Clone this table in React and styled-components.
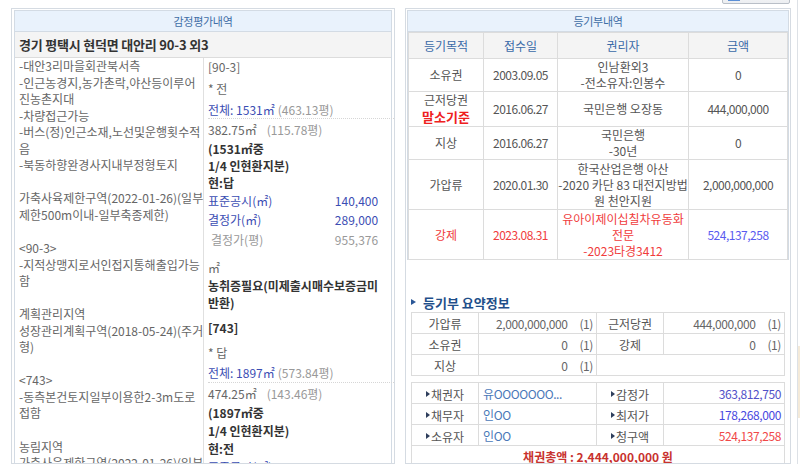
import React from "react";
import styled, { createGlobalStyle } from "styled-components";

const GlobalStyle = createGlobalStyle`
  html, body {
    margin: 0;
    padding: 0;
    background: #fff;
    overflow: hidden;
  }
  body {
    font-family: "Noto Sans CJK KR", "Liberation Sans", sans-serif;
    font-size: 12px;
    color: #555;
    letter-spacing: 0;
  }
`;

const Page = styled.div`
  display: grid;
  grid-template-columns: 384px 386px 1fr;
  grid-template-rows: 24px 456px;
  column-gap: 10px;
  row-gap: 4px;
  margin-top: -20px;
  padding-left: 11px;
  width: 800px;
  height: 484px;
  box-sizing: border-box;
  overflow: hidden;
`;

const Toolbar = styled.div`
  grid-column: 2;
  display: flex;
  justify-content: flex-end;
  align-items: flex-end;
  padding-right: 1px;
`;

const ToolButton = styled.div`
  width: 68px;
  height: 22px;
  box-sizing: border-box;
  border: 1px solid #b9bfc7;
  border-radius: 2px;
  background: linear-gradient(#ffffff, #eceef1);
  display: flex;
  align-items: flex-end;
  padding: 0 0 2px 5px;

  span {
    width: 12px;
    height: 6px;
    background: #5b8fd6;
  }
`;

const SideStrip = styled.div`
  grid-column: 3;
  grid-row: 1 / span 2;
  margin-left: -4px;
  border-left: 1px solid #dde1e6;
  display: flex;
  flex-direction: column;
  padding-top: 366px;

  span {
    height: 72px;
    background: #f4ead9;
  }
`;

const Panel = styled.section`
  border: 1px solid #d5dbe2;
  padding: ${(p) => p.$pad};
  box-sizing: border-box;
  overflow: hidden;
  background: #fff;
`;

const Box = styled.div`
  border: 1px solid #d3dbe4;
  border-bottom: none;
`;

const TitleBar = styled.div`
  height: 20px;
  line-height: 20px;
  text-align: center;
  background: #e9f2fc;
  color: #3f6ea6;
  font-size: 11px;
  letter-spacing: -0.3px;
  border-bottom: 1px solid #d3dbe4;
`;

const Address = styled.div`
  height: 25px;
  line-height: 25px;
  padding-left: 4px;
  background: #f4f4f4;
  border-bottom: 1px solid #dcdcdc;
  color: #333;
  font-weight: 700;
  font-size: 13px;
  letter-spacing: -0.2px;
  white-space: nowrap;
`;

const Body = styled.div`
  display: grid;
  grid-template-columns: 189px 1fr;
  height: 420px;
`;

const NoteCol = styled.div`
  border-right: 1px solid #e0e0e0;
  padding-left: 4px;
  line-height: 16.55px;
  color: #666;
`;

const NoteLine = styled.div`
  height: 16.55px;
  white-space: nowrap;
`;

const SpecCol = styled.div`
  padding-left: 4px;
`;

const SpecLine = styled.div`
  height: ${(p) => p.$h || 17}px;
  margin-top: ${(p) => p.$mt || 0}px;
  display: flex;
  align-items: center;
  justify-content: space-between;
  padding-right: 20px;
  margin-right: 3px;
  white-space: nowrap;
  font-weight: ${(p) => (p.$bold ? 700 : 400)};
  color: ${(p) => (p.$bold ? "#333" : "#666")};
  border-bottom: ${(p) => (p.$dotted ? "1px dotted #d6d6d6" : "none")};
`;

const Blue = styled.span`
  color: #3b4db3;
`;

const Muted = styled.span`
  color: #999;
  margin-left: ${(p) => p.$gap || 3}px;
`;

const Table = styled.table`
  width: 100%;
  border-collapse: collapse;
  table-layout: fixed;
  text-align: center;

  td, th {
    border: 1px solid #dcdcdc;
    padding: 0;
    line-height: 16px;
  }
`;

const HeadRow = styled.tr`
  height: 26px;
  background: #f4f4f4;

  th {
    font-weight: 400;
    color: #3a6aa8;
  }
`;

const Row = styled.tr`
  height: ${(p) => p.$h}px;
  color: ${(p) => (p.$red ? "#f03c3c" : "#555")};
`;

const NumCell = styled.td`
  letter-spacing: -0.5px;
  color: ${(p) => p.$color || "inherit"};
`;

const RedBold = styled.div`
  color: #ee2020;
  font-weight: 700;
  font-size: 13px;
  line-height: 18px;
`;

const Summary = styled.div`
  margin: 0 4px;
`;

const SummaryHeading = styled.h3`
  margin: 33px 0 1px 0;
  height: 18px;
  display: flex;
  align-items: center;
  gap: 7px;
  font-size: 13px;
  font-weight: 700;
  color: #1f4f8a;

  &::before {
    content: "";
    border-left: 5px solid #2b5797;
    border-top: 3px solid transparent;
    border-bottom: 3px solid transparent;
  }
`;

const SumTable = styled.table`
  width: 100%;
  border-collapse: collapse;
  table-layout: fixed;
  margin-bottom: ${(p) => p.$mb || 0}px;

  td {
    border: 1px solid #dcdcdc;
    height: 20px;
    padding: 0;
    white-space: nowrap;
  }
`;

const Label = styled.td`
  text-align: center;
  color: #555;
`;

const Value = styled.td`
  text-align: ${(p) => p.$align || "right"};
  padding: ${(p) => (p.$align === "left" ? "0 0 0 4px" : "0 3px 0 0")} !important;
  color: ${(p) => p.$color || "#666"};
  letter-spacing: -0.4px;
`;

const Count = styled.span`
  margin-left: 12px;
  color: #666;
`;

const Bullet = styled.span`
  display: inline-flex;
  align-items: center;
  gap: 1px;

  &::before {
    content: "";
    border-left: 4px solid #2e3e5c;
    border-top: 3px solid transparent;
    border-bottom: 3px solid transparent;
  }
`;

const Total = styled.td`
  text-align: center;
  color: #c8322e;
  font-weight: 700;
`;

const notes = [
  "-대안3리마을회관북서측",
  "-인근농경지,농가촌락,야산등이루어",
  "진농촌지대",
  "-차량접근가능",
  "-버스(정)인근소재,노선및운행횟수적",
  "음",
  "-북동하향완경사지내부정형토지",
  "",
  "가축사육제한구역(2022-01-26)(일부",
  "제한500m이내-일부축종제한)",
  "",
  "<90-3>",
  "-지적상맹지로서인접지통해출입가능",
  "함",
  "",
  "계획관리지역",
  "성장관리계획구역(2018-05-24)(주거",
  "형)",
  "",
  "<743>",
  "-동측본건토지일부이용한2-3m도로",
  "접함",
  "",
  "농림지역",
  "가축사육제한구역(2022-01-26)(일부",
];

const registry = [
  { kind: "소유권", date: "2003.09.05", holder: ["인남환외3", "-전소유자:인봉수"], amount: "0", h: 33 },
  { kind: "근저당권", base: true, date: "2016.06.27", holder: ["국민은행 오장동"], amount: "444,000,000", h: 34 },
  { kind: "지상", date: "2016.06.27", holder: ["국민은행", "-30년"], amount: "0", h: 33 },
  { kind: "가압류", date: "2020.01.30", holder: ["한국산업은행 아산", "-2020 카단 83 대전지방법", "원 천안지원"], amount: "2,000,000,000", h: 50 },
  { kind: "강제", red: true, date: "2023.08.31", holder: ["유아이제이십칠차유동화", "전문", "-2023타경3412"], amount: "524,137,258", h: 50 },
];

export default function App() {
  return (
    <>
      <GlobalStyle />
      <Page>
        <Toolbar>
          <ToolButton>
            <span />
          </ToolButton>
        </Toolbar>

        <Panel $pad="1px 2px 0 2px" style={{ gridColumn: 1, gridRow: 2 }}>
          <Box>
            <TitleBar>감정평가내역</TitleBar>
            <Address>경기 평택시 현덕면 대안리 90-3 외3</Address>
            <Body>
              <NoteCol>
                {notes.map((n, i) => (
                  <NoteLine key={i}>{n}</NoteLine>
                ))}
              </NoteCol>
              <SpecCol>
                <SpecLine>[90-3]</SpecLine>
                <SpecLine $h={26}>* 전</SpecLine>
                <SpecLine $dotted>
                  <span>
                    <Blue>전체: 1531㎡</Blue>
                    <Muted>(463.13평)</Muted>
                  </span>
                </SpecLine>
                <SpecLine $h={21}>
                  <span>
                    382.75㎡<Muted $gap={10}>(115.78평)</Muted>
                  </span>
                </SpecLine>
                <SpecLine $bold>(1531㎡중</SpecLine>
                <SpecLine $bold>1/4 인현환지분)</SpecLine>
                <SpecLine $bold>현:답</SpecLine>
                <SpecLine $h={19}>
                  <Blue>표준공시(㎡)</Blue>
                  <Blue>140,400</Blue>
                </SpecLine>
                <SpecLine $h={19}>
                  <Blue>결정가(㎡)</Blue>
                  <Blue>289,000</Blue>
                </SpecLine>
                <SpecLine $h={20}>
                  <Muted $gap={0}>결정가(평)</Muted>
                  <Muted>955,376</Muted>
                </SpecLine>
                <SpecLine $h={18} $mt={9}>㎡</SpecLine>
                <SpecLine $h={18} $bold>농취증필요(미제출시매수보증금미</SpecLine>
                <SpecLine $h={17} $bold>반환)</SpecLine>
                <SpecLine $h={18} $mt={7} $bold>[743]</SpecLine>
                <SpecLine $h={18} $mt={7}>* 답</SpecLine>
                <SpecLine $h={20} $mt={1} $dotted>
                  <span>
                    <Blue>전체: 1897㎡</Blue>
                    <Muted>(573.84평)</Muted>
                  </span>
                </SpecLine>
                <SpecLine $h={20}>
                  <span>
                    474.25㎡<Muted $gap={10}>(143.46평)</Muted>
                  </span>
                </SpecLine>
                <SpecLine $h={18} $bold>(1897㎡중</SpecLine>
                <SpecLine $h={18} $bold>1/4 인현환지분)</SpecLine>
                <SpecLine $h={18} $bold>현:전</SpecLine>
                <SpecLine $h={18}>
                  <Blue>표준공시(㎡)</Blue>
                  <Blue>61,700</Blue>
                </SpecLine>
              </SpecCol>
            </Body>
          </Box>
        </Panel>

        <Panel $pad="1px 1px 0 1px" style={{ gridColumn: 2, gridRow: 2 }}>
          <Box>
            <TitleBar>등기부내역</TitleBar>
            <Table>
              <colgroup>
                <col style={{ width: 75 }} />
                <col style={{ width: 74 }} />
                <col style={{ width: 131 }} />
                <col />
              </colgroup>
              <tbody>
                <HeadRow>
                  <th>등기목적</th>
                  <th>접수일</th>
                  <th>권리자</th>
                  <th>금액</th>
                </HeadRow>
                {registry.map((r) => (
                  <Row key={r.kind} $h={r.h} $red={r.red}>
                    <td>
                      {r.kind}
                      {r.base && <RedBold>말소기준</RedBold>}
                    </td>
                    <NumCell>{r.date}</NumCell>
                    <td>
                      {r.holder.map((l) => (
                        <div key={l}>{l}</div>
                      ))}
                    </td>
                    <NumCell $color={r.red ? "#5a5af0" : undefined}>{r.amount}</NumCell>
                  </Row>
                ))}
              </tbody>
            </Table>
          </Box>

          <Summary>
            <SummaryHeading>등기부 요약정보</SummaryHeading>
            <SumTable $mb={6}>
              <colgroup>
                <col style={{ width: 67 }} />
                <col style={{ width: 118 }} />
                <col style={{ width: 67 }} />
                <col />
              </colgroup>
              <tbody>
                <tr>
                  <Label>가압류</Label>
                  <Value>
                    2,000,000,000<Count>(1)</Count>
                  </Value>
                  <Label>근저당권</Label>
                  <Value>
                    444,000,000<Count>(1)</Count>
                  </Value>
                </tr>
                <tr>
                  <Label>소유권</Label>
                  <Value>
                    0<Count>(1)</Count>
                  </Value>
                  <Label>강제</Label>
                  <Value>
                    0<Count>(1)</Count>
                  </Value>
                </tr>
                <tr>
                  <Label>지상</Label>
                  <Value>
                    0<Count>(1)</Count>
                  </Value>
                  <td colSpan={2} />
                </tr>
              </tbody>
            </SumTable>

            <SumTable>
              <colgroup>
                <col style={{ width: 67 }} />
                <col style={{ width: 118 }} />
                <col style={{ width: 67 }} />
                <col />
              </colgroup>
              <tbody>
                <tr>
                  <Label><Bullet>채권자</Bullet></Label>
                  <Value $align="left" $color="#4a78b8">유OOOOOOO...</Value>
                  <Label><Bullet>감정가</Bullet></Label>
                  <Value $color="#5050c8">363,812,750</Value>
                </tr>
                <tr>
                  <Label><Bullet>채무자</Bullet></Label>
                  <Value $align="left" $color="#4a78b8">인OO</Value>
                  <Label><Bullet>최저가</Bullet></Label>
                  <Value $color="#4848e0">178,268,000</Value>
                </tr>
                <tr>
                  <Label><Bullet>소유자</Bullet></Label>
                  <Value $align="left" $color="#4a78b8">인OO</Value>
                  <Label><Bullet>청구액</Bullet></Label>
                  <Value $color="#f04848">524,137,258</Value>
                </tr>
                <tr>
                  <Total colSpan={4}>채권총액 : 2,444,000,000 원</Total>
                </tr>
              </tbody>
            </SumTable>
          </Summary>
        </Panel>

        <SideStrip>
          <span />
        </SideStrip>
      </Page>
    </>
  );
}
